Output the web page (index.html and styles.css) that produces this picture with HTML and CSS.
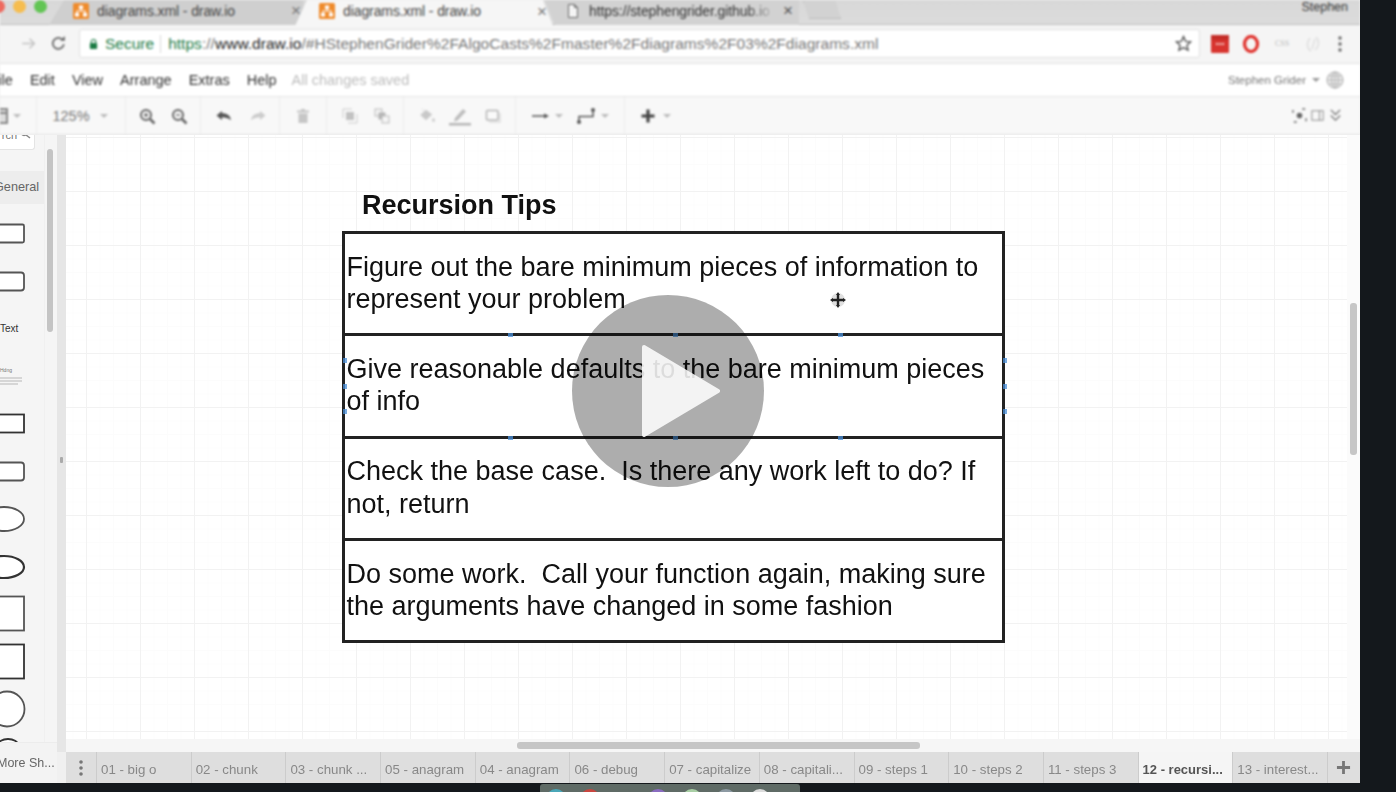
FILE: index.html
```html
<!DOCTYPE html>
<html lang="en">
<head>
<meta charset="utf-8">
<title>diagrams.xml - draw.io</title>
<link rel="stylesheet" href="styles.css">
</head>
<body>
<div class="screen">
  <div class="chrome">
    <div class="tabstrip">
      <div class="lights"><span class="light red"></span><span class="light amber"></span><span class="light green"></span></div>
      <div class="tab tab-back">
        <svg class="fav" viewBox="0 0 16 16"><rect width="16" height="16" rx="1.5" fill="#ef8b2c"/><path d="M8 5v3M8 8H4v3M8 8h4v3" stroke="#fff" stroke-width="1.2" fill="none"/><rect x="6" y="2.5" width="4" height="3.5" fill="#fff"/><rect x="2" y="10" width="4" height="3.5" fill="#fff"/><rect x="10" y="10" width="4" height="3.5" fill="#fff"/></svg>
        <span class="tab-title">diagrams.xml - draw.io</span><span class="tab-x">×</span>
      </div>
      <div class="tab tab-active">
        <svg class="fav" viewBox="0 0 16 16"><rect width="16" height="16" rx="1.5" fill="#ef8b2c"/><path d="M8 5v3M8 8H4v3M8 8h4v3" stroke="#fff" stroke-width="1.2" fill="none"/><rect x="6" y="2.5" width="4" height="3.5" fill="#fff"/><rect x="2" y="10" width="4" height="3.5" fill="#fff"/><rect x="10" y="10" width="4" height="3.5" fill="#fff"/></svg>
        <span class="tab-title">diagrams.xml - draw.io</span><span class="tab-x">×</span>
      </div>
      <div class="tab tab-third">
        <svg class="fav" viewBox="0 0 16 16"><path d="M3.5 1.5h6l3 3v10h-9zM9.5 1.5v3h3" fill="#f4f4f4" stroke="#666" stroke-width="1"/></svg>
        <span class="tab-title tab-fade">https://stephengrider.github.io</span><span class="tab-x">×</span>
      </div>
      <div class="tab-new"></div>
      <div class="profile">Stephen</div>
    </div>
    <div class="addressrow">
      <svg class="nav nav-back" viewBox="0 0 16 16"><path d="M14 8H3M7 3.500 2.500 8 7 12.500" stroke="#777" stroke-width="1.500" fill="none"/></svg>
      <svg class="nav nav-forward" viewBox="0 0 16 16"><path d="M2 8h11M9 3.500 13.500 8 9 12.500" stroke="#c4c4c4" stroke-width="1.500" fill="none"/></svg>
      <svg class="nav nav-reload" viewBox="0 0 16 16"><path d="M13 8.500A5.200 5.200 0 1 1 11.500 4.200" stroke="#666" stroke-width="1.600" fill="none"/><path d="M9.500 5.500h4.500V1z" fill="#666"/></svg>
      <div class="omnibox">
        <svg class="lock" viewBox="0 0 10 12"><path d="M2.500 5V3.500a2.500 2.500 0 0 1 5 0V5" stroke="#1c7c45" stroke-width="1.200" fill="none"/><rect x="1" y="5" width="8" height="6.500" rx="1" fill="#1c7c45"/></svg>
        <span class="secure">Secure</span>
        <span class="url"><span class="url-green">https</span><span class="url-dim">://</span><span class="url-host">www.draw.io</span><span class="url-dim">/#HStephenGrider%2FAlgoCasts%2Fmaster%2Fdiagrams%2F03%2Fdiagrams.xml</span></span>
        <svg class="star" viewBox="0 0 16 16"><path d="M8 1.500 10 6l4.800.4-3.600 3.200 1.100 4.700L8 11.800l-4.300 2.500 1.100-4.700L1.200 6.400 6 6z" fill="none" stroke="#555" stroke-width="1.300"/></svg>
      </div>
      <div class="extensions">
        <svg class="ext" viewBox="0 0 18 18"><rect y="0" width="18" height="18" rx="1" fill="#d8352f"/><rect y="0" width="18" height="5" fill="#c42c27"/><circle cx="6" cy="9" r="1" fill="#fff"/><circle cx="9" cy="9" r="1" fill="#fff"/><circle cx="12" cy="9" r="1" fill="#fff"/></svg>
        <svg class="ext" viewBox="0 0 18 18"><ellipse cx="9" cy="9" rx="6.500" ry="7.500" fill="none" stroke="#e0302b" stroke-width="3.200"/></svg>
        <span class="ext-css">CSS</span>
        <svg class="ext ext-swirl" viewBox="0 0 18 18"><path d="M6 3C2 8 3 14 7 16M12 2c4 4 3 10-1 13M11 4 8 14" fill="none" stroke="#ddd" stroke-width="1.500"/></svg>
        <svg class="ext ext-dots" viewBox="0 0 6 18"><circle cx="3" cy="3" r="1.700" fill="#666"/><circle cx="3" cy="9" r="1.700" fill="#666"/><circle cx="3" cy="15" r="1.700" fill="#666"/></svg>
      </div>
    </div>
    <div class="menubar">
      <span class="menu first">File</span><span class="menu">Edit</span><span class="menu">View</span><span class="menu">Arrange</span><span class="menu">Extras</span><span class="menu">Help</span>
      <span class="saved">All changes saved</span>
      <span class="user">Stephen Grider<i class="caret user-caret"></i></span>
      <svg class="globe" viewBox="0 0 18 18"><circle cx="9" cy="9" r="8" fill="#f0f0f0" stroke="#aaa"/><ellipse cx="9" cy="9" rx="3.500" ry="8" fill="none" stroke="#aaa" stroke-width=".9"/><path d="M1 9h16M2.500 5h13M2.500 13h13M9 1v16" stroke="#aaa" stroke-width=".9"/></svg>
    </div>
    <div class="toolbar">
      <div class="group g-view"><svg class="ti ti-panel" viewBox="0 0 12 18"><path d="M-6 2H7v14H-6zM-6 6H7" fill="#ddd" stroke="#888" stroke-width="2"/></svg><i class="caret"></i></div>
      <div class="group g-zoom"><span class="percent">125%</span><i class="caret"></i></div>
      <div class="group g-mag">
        <svg class="ti" viewBox="0 0 18 18"><circle cx="8" cy="8" r="5" fill="none" stroke="#666" stroke-width="2"/><path d="m12 12 4.500 4.500" stroke="#666" stroke-width="2.500"/><path d="M6 8h4M8 6v4" stroke="#666" stroke-width="1.300"/></svg>
        <svg class="ti" viewBox="0 0 18 18"><circle cx="8" cy="8" r="5" fill="none" stroke="#666" stroke-width="2"/><path d="m12 12 4.500 4.500" stroke="#666" stroke-width="2.500"/><path d="M6 8h4" stroke="#666" stroke-width="1.300"/></svg>
      </div>
      <div class="group g-undo">
        <svg class="ti" viewBox="0 0 18 18"><path d="M7 4 1.500 8.500 7 13v-2.800c3.500 0 6 .8 9 3-.5-4.500-4-7-9-7z" fill="#555"/></svg>
        <svg class="ti" viewBox="0 0 18 18"><path d="m11 4 5.500 4.500L11 13v-2.800c-3.500 0-6 .8-9 3 .5-4.500 4-7 9-7z" fill="#ccc"/></svg>
      </div>
      <div class="group g-trash"><svg class="ti" viewBox="0 0 18 18"><path d="M3 3.500h12v2H3zM7 2h4v1.500H7zM4.500 6.500h9V16h-9z" fill="#c6c6c6"/></svg></div>
      <div class="group g-order">
        <svg class="ti" viewBox="0 0 18 18"><path d="M11 2H2v9M7 16h9V7" fill="none" stroke="#ccc"/><rect x="5" y="5" width="8" height="8" fill="#c2c2c2"/></svg>
        <svg class="ti" viewBox="0 0 18 18"><rect x="2" y="2" width="7" height="7" fill="#f4f4f4" stroke="#bbb"/><rect x="5.500" y="5.500" width="7" height="7" fill="#b5b5b5"/><rect x="9" y="9" width="7" height="7" fill="#f4f4f4" stroke="#bbb"/></svg>
      </div>
      <div class="group g-style">
        <svg class="ti" viewBox="0 0 18 18"><path d="M4 1.500 6 4M8 3 2.500 8 8 13l6-5.500zM15.500 11c-.8 1.200-1.200 1.800-1.200 2.400a1.200 1.200 0 0 0 2.400 0c0-.6-.4-1.200-1.200-2.400z" fill="#c8c8c8" stroke="#d0d0d0" stroke-width=".6"/></svg>
        <svg class="ti ti-line" viewBox="0 0 22 22"><path d="m6 13 8-9 3 2.500-8.500 9-3.500 1z" fill="#bdbdbd"/><rect x="0" y="18" width="22" height="2.500" fill="#b5b5b5"/></svg>
        <svg class="ti" viewBox="0 0 18 18"><rect x="2.500" y="3.500" width="11.500" height="9.500" rx="1" fill="#fafafa" stroke="#b5b5b5" stroke-width="1.500"/><path d="M16 6v9H5" stroke="#ddd" stroke-width="1.500" fill="none"/></svg>
      </div>
      <div class="group g-conn">
        <svg class="ti ti-wide" viewBox="0 0 22 18"><path d="M3 9h13" stroke="#555" stroke-width="1.500"/><path d="m15 6.500 5 2.500-5 2.500z" fill="#555"/></svg><i class="caret"></i>
        <svg class="ti ti-wide" viewBox="0 0 22 18"><path d="M4 15V9.500h14V3" stroke="#555" stroke-width="1.500" fill="none"/><circle cx="4" cy="15" r="2" fill="#555"/><circle cx="18" cy="3" r="2" fill="#555"/></svg><i class="caret"></i>
      </div>
      <div class="group g-add"><svg class="ti" viewBox="0 0 18 18"><path d="M9 2.500v13M2.500 9h13" stroke="#444" stroke-width="3.200"/></svg><i class="caret"></i></div>
      <div class="group g-right">
        <svg class="ts" viewBox="0 0 16 16"><path d="M1 5V1h4M11 1h4v4M15 11v4h-4M5 15H1v-4" fill="none" stroke="#666" stroke-width="1.500" stroke-dasharray="3 9"/><circle cx="8" cy="8" r="3" fill="#666"/></svg>
        <svg class="ts" viewBox="0 0 16 16"><rect x="2" y="3" width="12" height="10" fill="none" stroke="#888"/><path d="M10 3v10" stroke="#888"/></svg>
        <svg class="ts" viewBox="0 0 16 16"><path d="m3 2 5 5 5-5M3 8l5 5 5-5" fill="none" stroke="#777" stroke-width="1.400"/></svg>
      </div>
    </div>
  </div>
  <div class="workspace">
    <aside class="sidebar">
      <div class="palette">
        <div class="search"><span class="search-text">rch</span><svg class="search-icon" viewBox="0 0 12 12"><circle cx="5" cy="4.500" r="3" fill="none" stroke="#888" stroke-width="1.300"/><path d="m7 7 4 3" stroke="#888" stroke-width="1.500"/></svg></div>
        <div class="general">General</div>
        <svg class="shapes" viewBox="0 0 46 540" width="46" height="540">
          <g fill="#fff" stroke="#555" stroke-width="1.800">
            <rect x="-20" y="19.500" width="44" height="18" rx="1.500"/>
            <rect x="-20" y="67.500" width="44" height="18" rx="3"/>
            <rect x="-20" y="209.500" width="44" height="18" stroke="#333"/>
            <rect x="-20" y="257.500" width="44" height="18" rx="3"/>
            <ellipse cx="4" cy="314" rx="20" ry="12"/>
            <ellipse cx="4" cy="362" rx="20" ry="11" stroke="#333" stroke-width="2.200"/>
            <rect x="-20" y="391.500" width="44" height="34"/>
            <rect x="-20" y="439.500" width="44" height="34" stroke="#333"/>
            <circle cx="7" cy="504" r="17.500"/>
            <ellipse cx="8" cy="540" rx="10" ry="6" stroke="#333" stroke-width="2"/>
          </g>
          <text x="0" y="127" class="shape-label">Text</text>
          <text x="0" y="167" class="shape-tiny">Hdng</text>
          <path d="M0 173h22M0 176h22M0 179h18" stroke="#ccc" stroke-width="1.500"/>
        </svg>
      </div>
      <div class="side-scroll"><div class="side-thumb"></div></div>
      <div class="more">More Sh...</div>
    </aside>
    <div class="sash"><span class="sash-dot"></span></div>
    <main class="canvas">
      <h1 class="diagram-title">Recursion Tips</h1>
      <div class="diagram">
        <div class="cell">Figure out the bare minimum pieces of information to represent your problem</div>
        <div class="cell">Give reasonable defaults to the bare minimum pieces of info</div>
        <div class="cell">Check the base case.&nbsp; Is there any work left to do? If not, return</div>
        <div class="cell">Do some work.&nbsp; Call your function again, making sure the arguments have changed in some fashion</div>
        <svg class="handles" viewBox="0 0 663 412">
          <g fill="#4a8fd8" opacity=".75">
            <rect x="165" y="102" width="5" height="4"/><rect x="330" y="102" width="5" height="4"/><rect x="495" y="102" width="5" height="4"/>
            <rect x="165" y="205" width="5" height="4"/><rect x="330" y="205" width="5" height="4"/><rect x="495" y="205" width="5" height="4"/>
            <rect x="0" y="127" width="4" height="5"/><rect x="0" y="153" width="4" height="5"/><rect x="0" y="178" width="4" height="5"/>
            <rect x="660" y="127" width="4" height="5"/><rect x="660" y="153" width="4" height="5"/><rect x="660" y="178" width="4" height="5"/>
          </g>
          <circle cx="495" cy="69" r="7" fill="#000" opacity=".12"/>
          <path d="M495 63v12M489 69h12" stroke="#222" stroke-width="2.400"/>
          <path d="m495 61-2 3h4zM495 77l-2-3h4zM487 69l3-2v4zM503 69l-3-2v4z" fill="#222"/>
        </svg>
      </div>
      <div class="scroll-v"><div class="thumb-v"></div></div>
      <div class="scroll-h"><div class="thumb-h"></div></div>
      <div class="play">
        <svg class="play-tri" viewBox="0 0 80 94"><path d="M3 3 77 47 3 91z" fill="#fff" stroke="#fff" stroke-width="4" stroke-linejoin="round"/></svg>
      </div>
    </main>
  </div>
  <nav class="pages">
    <div class="page-menu"><svg class="page-dots" viewBox="0 0 4 16"><circle cx="2" cy="2" r="1.800" fill="#777"/><circle cx="2" cy="8" r="1.800" fill="#777"/><circle cx="2" cy="14" r="1.800" fill="#777"/></svg></div>
    <div class="page">01 - big o</div>
    <div class="page">02 - chunk</div>
    <div class="page">03 - chunk ...</div>
    <div class="page">05 - anagram</div>
    <div class="page">04 - anagram</div>
    <div class="page">06 - debug</div>
    <div class="page">07 - capitalize</div>
    <div class="page">08 - capitali...</div>
    <div class="page">09 - steps 1</div>
    <div class="page">10 - steps 2</div>
    <div class="page">11 - steps 3</div>
    <div class="page page-active">12 - recursi...</div>
    <div class="page">13 - interest...</div>
    <div class="page-add"><svg class="page-plus" viewBox="0 0 16 16"><path d="M8 1v14M1 8h14" stroke="#777" stroke-width="3"/></svg></div>
  </nav>
</div>
<div class="desktop">
  <div class="dock"><i class="dot d1"></i><i class="dot d2"></i><i class="dot d3"></i><i class="dot d4"></i><i class="dot d5"></i><i class="dot d6"></i><i class="dot d7"></i></div>
</div>
</body>
</html>
```

FILE: styles.css
```css
* { box-sizing: border-box; }
html, body { margin: 0; padding: 0; }
body {
  width: 1396px;
  height: 792px;
  overflow: hidden;
  background: #14181c;
  font-family: "Liberation Sans", Arial, sans-serif;
}
.screen {
  width: 1360px;
  height: 783px;
  display: flex;
  flex-direction: column;
  background: #f0f0f0;
  overflow: hidden;
}
.chrome { flex: none; filter: blur(.8px); }

/* browser tab strip */
.tabstrip {
  height: 25px;
  display: flex;
  align-items: stretch;
  background: linear-gradient(#d8d8d8, #dcdcdc);
  border-bottom: 1px solid #bdbdbd;
}
.lights { width: 57px; display: flex; gap: 8px; margin-left: -8px; flex: none; }
.light { width: 13px; height: 13px; border-radius: 50%; flex: none; }
.red { background: #ee6a5f; }
.amber { background: #f6bd4f; }
.green { background: #62c554; }
.tab {
  display: flex;
  align-items: center;
  flex: none;
  height: 25px;
  font-size: 14px;
  color: #444;
  padding-bottom: 4px;
}
.tab-back {
  width: 254px;
  margin-right: -8px;
  padding-left: 24px;
  background: #cfcfcf;
  clip-path: polygon(0 100%, 15px 0, 100% 0, 100% 100%);
}
.tab-active {
  width: 258px;
  padding-left: 24px;
  margin-right: -8px;
  background: #f6f6f6;
  height: 26px;
  position: relative;
  clip-path: polygon(0 100%, 12px 0, 248px 0, 100% 100%);
}
.tab-third {
  width: 254px;
  padding-left: 20px;
  background: #d2d2d2;
  clip-path: polygon(0 0, 100% 0, 100% 0, 100% 100%, 10px 100%);
}
.fav { width: 16px; height: 16px; flex: none; margin-right: 8px; }
.tab-title { white-space: nowrap; width: 196px; overflow: hidden; flex: none; letter-spacing: -.1px; }
.tab-third .tab-title { width: 186px; color: #333; }
.tab-fade { -webkit-mask-image: linear-gradient(90deg, #000 85%, transparent); mask-image: linear-gradient(90deg, #000 85%, transparent); }
.tab-x { font-size: 17px; color: #777; margin-left: -2px; line-height: 1; }
.tab-third .tab-x { margin-left: 8px; color: #555; }
.tab-new {
  width: 38px;
  height: 18px;
  margin-left: 4px;
  margin-top: 1px;
  background: #d2d2d2;
  border: 1px solid #bdbdbd;
  border-top: 0;
  clip-path: polygon(0 0, 86% 0, 100% 100%, 16% 100%);
}
.profile { margin-left: auto; margin-right: 12px; font-size: 12.5px; color: #333; line-height: 15px; }

/* address row */
.addressrow {
  height: 39px;
  display: flex;
  align-items: center;
  background: #f5f5f5;
  border-bottom: 1px solid #e2e2e2;
  padding-bottom: 1px;
}
.nav { width: 17px; height: 17px; flex: none; }
.nav-back { margin-left: -18px; }
.nav-forward { margin-left: 21px; }
.nav-reload { margin-left: 13px; }
.omnibox {
  width: 1121px;
  height: 29px;
  margin-left: 12px;
  display: flex;
  align-items: center;
  background: #fff;
  border: 1px solid #e0e0e0;
  border-radius: 3px;
  padding-left: 9px;
  font-size: 15.5px;
  white-space: nowrap;
}
.lock { width: 9px; height: 12px; flex: none; }
.secure { color: #1c7c45; margin-left: 7px; padding-right: 6px; border-right: 1px solid #d8d8d8; line-height: 18px; }
.url { margin-left: 7px; color: #777; letter-spacing: .035px; }
.url-green { color: #1c7c45; }
.url-dim { color: #777; }
.url-host { color: #222; }
.star { width: 17px; height: 17px; margin-left: auto; margin-right: 7px; flex: none; }
.extensions { display: flex; align-items: center; margin-left: 11px; gap: 13px; flex: none; }
.ext { width: 18px; height: 18px; flex: none; }
.ext-css { width: 18px; font-size: 8px; color: #bbb; font-family: "Liberation Serif", serif; text-align: center; }
.ext-swirl { opacity: .9; }
.ext-dots { width: 6px; margin-left: 2px; }

/* menu */
.menubar {
  height: 33px;
  display: flex;
  align-items: center;
  gap: 17px;
  background: #fff;
  border-bottom: 1px solid #e4e4e4;
  font-size: 14.5px;
  color: #333;
  padding-right: 16px;
}
.menu { flex: none; }
.first { margin-left: -10.5px; }
.saved { color: #bcbcbc; margin-left: -2px; font-size: 14.5px; }
.user { margin-left: auto; font-size: 11.5px; color: #777; display: flex; align-items: center; gap: 6px; }
.globe { width: 18px; height: 18px; margin-left: -11px; flex: none; }
.caret { display: inline-block; width: 0; height: 0; border: 4px solid transparent; border-top: 4px solid #bbb; border-bottom: 0; flex: none; }
.user-caret { border-top-color: #999; }

/* draw.io toolbar */
.toolbar {
  height: 38px;
  display: flex;
  align-items: center;
  background: #f8f8f8;
  border-bottom: 1px solid #e4e4e4;
}
.group {
  height: 100%;
  display: flex;
  align-items: center;
  justify-content: center;
  border-right: 1px solid #ebebeb;
  flex: none;
}
.ti { width: 18px; height: 18px; flex: none; }
.ti-panel { width: 12px; }
.ti-wide { width: 22px; }
.ti-line { width: 22px; height: 22px; }
.ts { width: 15px; height: 15px; flex: none; }
.percent { font-size: 14.5px; color: #777; margin-right: 10px; }
.g-view { width: 37px; justify-content: flex-start; gap: 1px; }
.g-zoom { width: 89px; padding-right: 2px; }
.g-mag { width: 75px; gap: 14px; }
.g-undo { width: 79px; gap: 16px; padding-left: 1px; }
.g-trash { width: 47px; }
.g-order { width: 77px; gap: 14px; padding-left: 1px; }
.g-style { width: 112px; gap: 13px; padding-left: 1px; }
.g-conn { width: 109px; gap: 4px; padding-right: 2px; }
.g-conn .caret { margin-right: 8px; }
.g-conn .caret:last-child { margin-right: 0; }
.g-add { width: 60px; gap: 6px; border-right: 0; justify-content: flex-start; padding-left: 14px; }
.g-right { margin-left: auto; border-right: 0; gap: 3px; padding-right: 17px; }

/* middle */
.workspace { flex: 1; min-height: 0; display: flex; }
.sidebar {
  width: 57px;
  height: 617px;
  flex: none;
  position: relative;
  background: #f5f5f5;
  display: flex;
  flex-wrap: wrap;
  align-content: flex-start;
  filter: blur(.7px);
}
.palette { width: 45px; height: 607px; overflow: hidden; border-right: 1px solid #f0f0f0; }
.search {
  height: 15px;
  width: 35px;
  background: #fff;
  border: 1px solid #e4e4e4;
  border-top: 0;
  border-left: 0;
  border-radius: 0 0 3px 0;
  display: flex;
  align-items: flex-end;
  justify-content: flex-end;
  font-size: 11px;
  color: #777;
  line-height: 10px;
  overflow: hidden;
  padding-right: 3px;
  padding-bottom: 9px;
  gap: 2px;
}
.search-text { margin-left: -6px; }
.search-icon { width: 12px; height: 12px; flex: none; }
.general {
  margin-top: 21px;
  height: 33px;
  line-height: 33px;
  background: #ededed;
  font-size: 12.7px;
  color: #666;
  text-indent: -6px;
}
.shapes { display: block; margin-top: 1px; overflow: hidden; }
.shape-label { font-size: 10px; fill: #333; font-family: "Liberation Sans", sans-serif; }
.shape-tiny { font-size: 5px; fill: #777; font-family: "Liberation Sans", sans-serif; }
.side-scroll { width: 12px; height: 607px; padding: 14px 4px 0 2px; }
.side-thumb { height: 183px; background: #c4c4c4; border-radius: 3px; }
.more {
  width: 57px;
  height: 41px;
  border-top: 1px solid #ececec;
  background: #f3f3f3;
  font-size: 12.5px;
  line-height: 40px;
  color: #666;
  white-space: nowrap;
  text-indent: -3px;
}
.sash { width: 9px; flex: none; background: #e6e6e6; position: relative; display: flex; justify-content: center; padding-top: 322px; }
.sash-dot { width: 3px; height: 6px; background: #aaa; border-radius: 1px; }

/* canvas */
.canvas {
  flex: 1;
  position: relative;
  min-width: 0;
  padding: 55px 0 0 276px;
  background-color: #fff;
  background-image:
    linear-gradient(#f2f2f2 1px, transparent 1px),
    linear-gradient(90deg, #f2f2f2 1px, transparent 1px),
    linear-gradient(#fcfcfc 1px, transparent 1px),
    linear-gradient(90deg, #fcfcfc 1px, transparent 1px);
  background-size: 54px 54px, 54px 54px, 13.5px 13.5px, 13.5px 13.5px;
  background-position: 0 2px, 20px 0, 0 2px, 20px 0;
  overflow: hidden;
}
.diagram-title {
  margin: 0 0 11px 20px;
  font-size: 27px;
  line-height: 30px;
  font-weight: 700;
  color: #111;
  filter: blur(.4px);
}
.diagram {
  width: 663px;
  position: relative;
  background: #fff;
  border: 3px solid #222;
  border-bottom: 0;
}
.cell {
  height: 102.3px;
  display: flex;
  align-items: center;
  padding: 0 16px 1px 1.5px;
  border-bottom: 3px solid #222;
  font-size: 27px;
  line-height: 32.5px;
  color: #111;
  filter: blur(.4px);
}
.handles { position: absolute; left: -2px; top: -3px; width: 663px; height: 412px; overflow: visible; filter: blur(.4px); }
.scroll-v { position: absolute; right: 0; top: 0; bottom: 13px; width: 13px; background: #fbfbfb; }
.thumb-v { width: 7px; height: 152px; margin: 168px 0 0 3px; background: #c6c6c6; border-radius: 3px; }
.scroll-h { position: absolute; left: 0; right: 0; bottom: 0; height: 13px; background: #f6f6f6; padding: 3px 0 0 451px; }
.thumb-h { width: 403px; height: 7px; background: #c6c6c6; border-radius: 3px; }
.play {
  position: absolute;
  left: 506px;
  top: 160px;
  width: 192px;
  height: 192px;
  border-radius: 50%;
  background: rgba(0, 0, 0, .32);
  display: flex;
  align-items: center;
  justify-content: flex-start;
  padding-left: 69px;
}
.play-tri { width: 80px; height: 94px; opacity: .86; }

/* page tabs */
.pages {
  height: 31px;
  flex: none;
  margin-left: 66px;
  display: flex;
  background: #dedede;
  font-size: 13.3px;
  color: #888;
  filter: blur(.7px);
}
.page-menu { width: 31px; flex: none; display: flex; align-items: center; justify-content: center; border-right: 1px solid #cccccc; }
.page-dots { width: 4px; height: 16px; }
.page {
  width: 94.7px;
  flex: none;
  padding-left: 4px;
  line-height: 35px;
  white-space: nowrap;
  overflow: hidden;
  border-right: 1px solid #cccccc;
}
.page-active { background: #f5f5f5; color: #555; font-weight: 700; font-size: 13px; }
.page-add { flex: 1; display: flex; align-items: center; justify-content: center; }
.page-plus { width: 15px; height: 15px; }

/* desktop behind */
.desktop { height: 9px; display: flex; padding-left: 540px; overflow: hidden; }
.dock {
  width: 260px;
  height: 9px;
  margin-top: 1px;
  display: flex;
  gap: 14px;
  padding-left: 6px;
  background: #5f6b66;
  border-radius: 3px 3px 0 0;
  filter: blur(.7px);
}
.dot { width: 20px; height: 20px; border-radius: 50%; margin-top: 5px; flex: none; }
.d1 { background: #4aa7b8; }
.d2 { background: #c9463f; }
.d3 { background: #5f6b66; }
.d4 { background: #8a6cc0; }
.d5 { background: #a9cfa5; }
.d6 { background: #8d9aa3; }
.d7 { background: #dcdcdc; }
```
